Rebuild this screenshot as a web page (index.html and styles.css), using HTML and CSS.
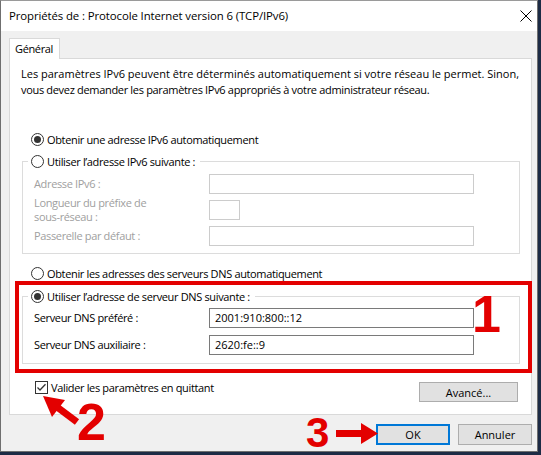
FILE: index.html
```html
<!DOCTYPE html>
<html lang="fr">
<head>
<meta charset="utf-8">
<title>Propriétés de : Protocole Internet version 6 (TCP/IPv6)</title>
<link rel="stylesheet" href="styles.css">
</head>
<body>
<div class="window">
  <div class="titlebar">
    <span class="title">Propriétés de : Protocole Internet version 6 (TCP/IPv6)</span>
    <svg class="close" width="12" height="12" viewBox="0 0 12 12"><path d="M0.5 0.5L11.5 11.5M11.5 0.5L0.5 11.5" stroke="#000" stroke-width="1" fill="none"/></svg>
  </div>
  <div class="content">
    <div class="tabs"><div class="tab">Général</div></div>
    <div class="panel">
      <p class="desc"><span class="l1">Les paramètres IPv6 peuvent être déterminés automatiquement si votre réseau le permet. Sinon,</span><br><span class="l2">vous devez demander les paramètres IPv6 appropriés à votre administrateur réseau.</span></p>
      <div class="radio-row first"><span class="radio checked"></span><span>Obtenir une adresse IPv6 automatiquement</span></div>
      <div class="group group-ip">
        <div class="legend"><span class="radio"></span><span>Utiliser l’adresse IPv6 suivante :</span></div>
        <div class="fields fields-ip disabled">
          <span class="lbl">Adresse IPv6 :</span><span class="input wide"></span>
          <span class="lbl two">Longueur du préfixe de<br>sous-réseau :</span><span class="input small"></span>
          <span class="lbl">Passerelle par défaut :</span><span class="input wide"></span>
        </div>
      </div>
      <div class="radio-row dns-auto"><span class="radio"></span><span>Obtenir les adresses des serveurs DNS automatiquement</span></div>
      <div class="group group-dns">
        <div class="legend"><span class="radio checked"></span><span>Utiliser l’adresse de serveur DNS suivante :</span></div>
        <div class="fields fields-dns">
          <span class="lbl">Serveur DNS préféré :</span><span class="input wide enabled">2001:910:800::12</span>
          <span class="lbl">Serveur DNS auxiliaire :</span><span class="input wide enabled">2620:fe::9</span>
        </div>
      </div>
      <div class="bottom-row">
        <div class="check-row"><span class="checkbox"><svg width="11" height="11" viewBox="0 0 11 11"><path d="M1.5 5.5L4 8L9.5 2.2" stroke="#333" stroke-width="1.3" fill="none"/></svg></span><span>Valider les paramètres en quittant</span></div>
        <div class="btn advanced">Avancé...</div>
      </div>
    </div>
    <div class="buttons">
      <div class="btn default">OK</div>
      <div class="btn">Annuler</div>
    </div>
  </div>
</div>
<svg class="annotations" width="541" height="455" viewBox="0 0 541 455">
  <rect x="17" y="283" width="513" height="88" fill="none" stroke="#e30000" stroke-width="4"/>
  <text x="472" y="332" class="num">1</text>
  <line x1="57" y1="407" x2="77" y2="422" stroke="#e30000" stroke-width="7"/>
  <polygon points="43,396 65,400 52,417" fill="#e30000"/>
  <text x="77" y="440" class="num">2</text>
  <line x1="336" y1="433.5" x2="364" y2="433.5" stroke="#e30000" stroke-width="7"/>
  <polygon points="378,433.5 361,423 361,444" fill="#e30000"/>
  <text x="306" y="447" class="num small">3</text>
</svg>
</body>
</html>
```
FILE: styles.css
```css
* { box-sizing: border-box; }
html, body { margin: 0; padding: 0; }
body {
  position: relative;
  width: 541px;
  height: 455px;
  overflow: hidden;
  background: #1d2b45;
  font-family: "Open Sans", "Noto Sans", sans-serif;
  font-size: 11px;
  letter-spacing: -0.35px;
  color: #000;
}
.window {
  width: 538px;
  height: 452px;
  background: #f0f0f0;
  border: 1px solid #6f6f6f;
  border-top-color: #9a9a9a;
  display: flex;
  flex-direction: column;
}
.titlebar {
  height: 30px;
  background: #fff;
  display: flex;
  align-items: center;
  justify-content: space-between;
  padding: 0 5px 0 8px;
  flex: none;
}
.title { line-height: 16px; font-size: 11.4px; letter-spacing: -0.1px; }
.close { display: block; }
.content {
  flex: 1;
  padding: 7px 5px 0 8px;
  display: flex;
  flex-direction: column;
}
.tabs { display: flex; }
.tab {
  position: relative;
  z-index: 1;
  width: 51px;
  height: 21px;
  margin-bottom: -1px;
  background: #fff;
  border: 1px solid #d9d9d9;
  border-bottom: none;
  padding-left: 5px;
  line-height: 19px;
}
.panel {
  background: #fff;
  border: 1px solid #d9d9d9;
  padding: 0 0 12px 0;
  display: flex;
  flex-direction: column;
}
.desc {
  margin: 7px 0 0 0;
  padding-left: 11px;
  line-height: 16px;
}
.desc .l1 { letter-spacing: 0; }
.desc .l2 { letter-spacing: -0.32px; }
.radio-row, .legend, .check-row {
  display: flex;
  align-items: center;
  height: 17px;
  gap: 3px;
  white-space: nowrap;
}
.radio-row { padding-left: 21px; }
.radio-row.first { margin-top: 33px; }
.radio-row.dns-auto { margin-top: 11px; }
.radio {
  width: 13px;
  height: 13px;
  border: 1px solid #333;
  border-radius: 50%;
  background: #fff;
  display: flex;
  align-items: center;
  justify-content: center;
  flex: none;
}
.radio.checked::after {
  content: "";
  width: 7px;
  height: 7px;
  border-radius: 50%;
  background: #333;
}
.group {
  border: 1px solid #dcdcdc;
  margin: 0 11px 0 12px;
}
.group-ip { margin-top: 13px; padding-bottom: 7px; }
.group-dns { margin-top: 14px; padding-bottom: 8px; }
.legend {
  margin-top: -9px;
  margin-left: 5px;
  padding: 0 5px 0 3px;
  width: fit-content;
  background: #fff;
}
.fields {
  display: grid;
  grid-template-columns: 175px auto;
  align-items: center;
  margin-left: 11px;
}
.fields-ip {
  margin-top: 4px;
  grid-template-rows: 20px 20px 20px;
  row-gap: 6px;
}
.fields-dns {
  margin-top: 3px;
  grid-template-rows: 20px 20px;
  row-gap: 7px;
}
.disabled .lbl { color: #a0a0a0; }
.lbl { line-height: 14px; white-space: nowrap; }
.input {
  height: 20px;
  border: 1px solid #cccccc;
  background: #fff;
  display: block;
  padding-left: 5px;
  line-height: 18px;
  letter-spacing: 0;
}
.input.wide { width: 265px; }
.input.small { width: 31px; }
.input.enabled { border-color: #7a7a7a; }
.bottom-row {
  display: flex;
  justify-content: space-between;
  align-items: flex-start;
  margin-top: 17px;
  padding: 0 13px 0 25px;
}
.check-row { height: 13px; }
.checkbox {
  width: 13px;
  height: 13px;
  border: 1px solid #333;
  background: #fff;
  display: flex;
  align-items: center;
  justify-content: center;
  flex: none;
}
.checkbox svg { display: block; }
.btn {
  height: 21px;
  background: #e1e1e1;
  border: 1px solid #adadad;
  display: flex;
  align-items: center;
  justify-content: center;
  width: 74px;
  letter-spacing: 0;
}
.btn.advanced { width: 99px; height: 20px; margin-top: 1px; }
.buttons {
  display: flex;
  justify-content: flex-end;
  gap: 8px;
  margin-top: 9px;
}
.btn.default { border: 2px solid #0078d7; }
.annotations {
  position: absolute;
  left: 0;
  top: 0;
  pointer-events: none;
}
.num {
  font-family: "Liberation Sans", Arial, sans-serif;
  font-weight: bold;
  font-size: 52px;
  letter-spacing: 0;
  fill: #e30000;
}
.num.small { font-size: 42px; }
```
